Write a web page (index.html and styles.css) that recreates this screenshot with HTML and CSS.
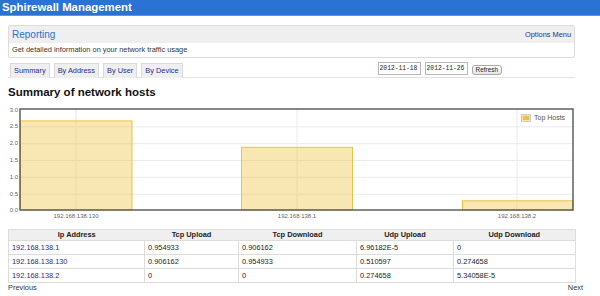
FILE: index.html
```html
<!DOCTYPE html>
<html lang="en">
  <head>
    <meta charset="UTF-8" />
    <title>Sphirewall Management</title>
    <link rel="stylesheet" href="styles.css">
  </head>
  <body>
    <header class="topbar">Sphirewall Management</header>

    <main class="page">
      <!-- Section panel -->
      <section class="panel">
        <div class="panel-head">
          <span class="panel-title">Reporting</span>
          <a href="#" class="panel-menu">Options Menu</a>
        </div>
        <div class="panel-body">Get detailed information on your network traffic usage</div>
      </section>

      <!-- Tabs and date range -->
      <div class="toolbar">
        <a href="#" class="tab">Summary</a>
        <a href="#" class="tab">By Address</a>
        <a href="#" class="tab">By User</a>
        <a href="#" class="tab">By Device</a>
        <div class="range">
          <input type="text" class="date" value="2012-11-18" />
          <input type="text" class="date" value="2012-11-26" />
          <button class="refresh">Refresh</button>
        </div>
      </div>

      <h2>Summary of network hosts</h2>

      <!-- Bar chart -->
      <svg class="chart" width="567" height="118" viewBox="0 0 567 118">
        <g class="grid">
          <line x1="12" y1="21.8" x2="565" y2="21.8" />
          <line x1="12" y1="38.7" x2="565" y2="38.7" />
          <line x1="12" y1="55.5" x2="565" y2="55.5" />
          <line x1="12" y1="72.3" x2="565" y2="72.3" />
          <line x1="12" y1="89.2" x2="565" y2="89.2" />
          <line x1="68" y1="4" x2="68" y2="105" />
          <line x1="289" y1="4" x2="289" y2="105" />
          <line x1="509" y1="4" x2="509" y2="105" />
        </g>
        <g class="ticks">
          <text x="10" y="5">3.0</text>
          <text x="10" y="21.8">2.5</text>
          <text x="10" y="38.7">2.0</text>
          <text x="10" y="55.5">1.5</text>
          <text x="10" y="72.3">1.0</text>
          <text x="10" y="89.2">0.5</text>
          <text x="10" y="105">0.0</text>
        </g>
        <g class="bars">
          <rect x="12.5" y="15.9" width="111.5" height="89.1" />
          <rect x="233.5" y="42.3" width="111" height="62.7" />
          <rect x="454.5" y="95.8" width="110.5" height="9.2" />
        </g>
        <rect class="frame" x="12" y="4" width="553" height="101" />
        <g class="labels">
          <text x="68" y="111">192.168.138.130</text>
          <text x="289" y="111">192.168.138.1</text>
          <text x="509" y="111">192.168.138.2</text>
        </g>
        <g class="legend">
          <rect class="legend-bg" x="512" y="8" width="52" height="11" />
          <rect class="legend-box" x="513.5" y="9.5" width="9" height="7" />
          <rect class="legend-swatch" x="514.5" y="10.5" width="7" height="5" />
          <text x="526" y="13.5">Top Hosts</text>
        </g>
      </svg>

      <table class="hosts">
        <colgroup>
          <col style="width: 136px" />
          <col style="width: 94px" />
          <col style="width: 118px" />
          <col style="width: 97px" />
          <col style="width: 122px" />
        </colgroup>
        <thead>
          <tr>
            <th>Ip Address</th>
            <th>Tcp Upload</th>
            <th>Tcp Download</th>
            <th>Udp Upload</th>
            <th>Udp Download</th>
          </tr>
        </thead>
        <tbody>
          <tr>
            <td><a href="#">192.168.138.1</a></td>
            <td>0.954933</td>
            <td>0.906162</td>
            <td>6.96182E-5</td>
            <td>0</td>
          </tr>
          <tr>
            <td><a href="#">192.168.138.130</a></td>
            <td>0.906162</td>
            <td>0.954933</td>
            <td>0.510597</td>
            <td>0.274658</td>
          </tr>
          <tr>
            <td><a href="#">192.168.138.2</a></td>
            <td>0</td>
            <td>0</td>
            <td>0.274658</td>
            <td>5.34058E-5</td>
          </tr>
        </tbody>
      </table>

      <div class="pager">
        <a href="#">Previous</a>
        <a href="#">Next</a>
      </div>
    </main>
  </body>
</html>
```

FILE: styles.css
```css
/* Base */
* {
  margin: 0;
  padding: 0;
  box-sizing: border-box;
}

body {
  background-color: #fff;
  color: #222;
  font-family: "Liberation Sans", Arial, sans-serif;
  font-size: 7.4px;
}

a {
  color: #2b2b8c;
  text-decoration: none;
}

/* Top bar */
.topbar {
  height: 16px;
  line-height: 15px;
  padding-left: 2px;
  background-color: #2a72d3;
  border-bottom: 1px solid #5b97e2;
  color: #fff;
  font-size: 11.4px;
  font-weight: bold;
}

.page {
  padding: 0 25px 0 8px;
}

/* Panel */
.panel {
  margin-top: 9px;
  border: 1px solid #dcdcdc;
  border-radius: 2px;
}

.panel-head {
  display: flex;
  justify-content: space-between;
  align-items: center;
  height: 17px;
  padding: 0 3px;
  background-color: #efefef;
}

.panel-title {
  color: #2a6fcf;
  font-size: 10px;
}

.panel-menu {
  font-size: 7.4px;
}

.panel-body {
  height: 14px;
  line-height: 14px;
  padding-left: 3px;
  color: #333;
}

/* Toolbar */
.toolbar {
  display: flex;
  align-items: flex-start;
  gap: 4px;
  height: 15px;
  margin-top: 5px;
  padding-left: 2px;
  border-bottom: 1px solid #e2e2e2;
}

.tab {
  height: 15px;
  line-height: 14px;
  padding: 0 3px;
  background-color: #efefef;
  border: 1px solid #dadada;
  border-bottom: none;
}

.range {
  display: flex;
  align-items: center;
  gap: 3px;
  margin-left: 191px;
  margin-top: -1px;
}

.date {
  width: 43px;
  height: 13px;
  padding: 0 0 0 1px;
  border: 1px solid #b8b8b8;
  font-family: "Liberation Mono", "Courier New", monospace;
  font-size: 6.3px;
  color: #222;
}

.date + .date {
  margin-left: 1px;
}

.refresh {
  height: 10px;
  padding: 0 3px;
  margin-left: 1px;
  margin-top: 2px;
  border: 1px solid #aaa;
  border-radius: 3px;
  background: linear-gradient(to bottom, #fff, #e6e6e6);
  font-family: "Liberation Sans", Arial, sans-serif;
  font-size: 6.4px;
  line-height: 8px;
  color: #222;
}

/* Heading */
h2 {
  margin-top: 7px;
  font-size: 11.5px;
  line-height: 14px;
  color: #111;
}

/* Chart */
.chart {
  display: block;
  margin-top: 6px;
  font-family: "Liberation Sans", Arial, sans-serif;
}

.grid line {
  stroke: #ebebeb;
  stroke-width: 1;
}

.ticks text {
  font-size: 6px;
  fill: #666;
  text-anchor: end;
  dominant-baseline: middle;
}

.bars rect {
  fill: rgba(237, 194, 64, 0.4);
  stroke: #edc240;
  stroke-width: 1;
}

.frame {
  fill: none;
  stroke: #555;
  stroke-width: 1.4;
}

.labels text {
  font-size: 6px;
  fill: #666;
  text-anchor: middle;
  dominant-baseline: middle;
}

.legend-bg {
  fill: #fff;
  opacity: 0.85;
}

.legend-box {
  fill: none;
  stroke: #ccc;
  stroke-width: 1;
}

.legend-swatch {
  fill: #edc240;
}

.legend text {
  font-size: 7px;
  fill: #545454;
  dominant-baseline: middle;
}

/* Table */
.hosts {
  width: 567px;
  margin-top: 6px;
  border-collapse: collapse;
  table-layout: fixed;
  border: 1px solid #dcdcdc;
}

.hosts th {
  height: 11px;
  background-color: #efefef;
  font-weight: bold;
  text-align: center;
  color: #222;
  line-height: 10px;
}

.hosts td {
  height: 14px;
  padding-left: 3px;
  border: 1px solid #dcdcdc;
  line-height: 12px;
  color: #222;
}

/* Pager */
.pager {
  display: flex;
  justify-content: space-between;
  margin-right: -8px;
  line-height: 10px;
}

.pager a {
  color: #333;
}
```
